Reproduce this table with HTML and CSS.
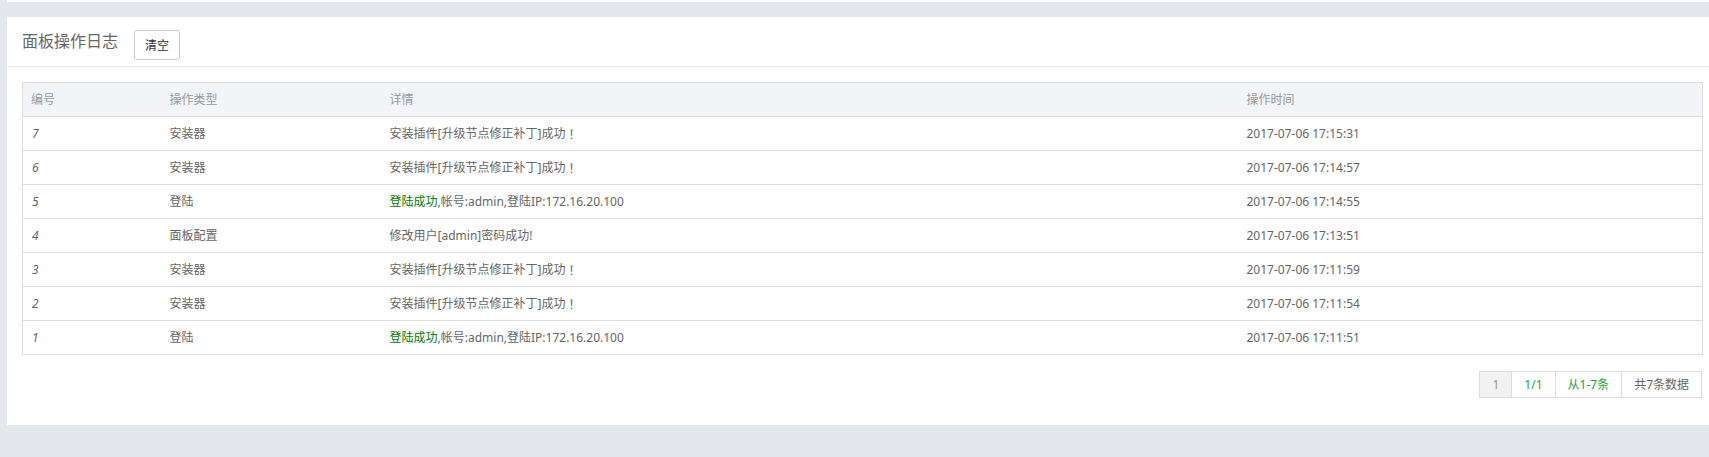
FILE: index.html
```html
<!DOCTYPE html>
<html lang="zh-CN">
<head>
<meta charset="utf-8">
<title>面板操作日志</title>
<link rel="stylesheet" href="styles.css">
</head>
<body>
<div class="page">
  <div class="prev-panel"></div>
  <div class="panel">
    <div class="panel-head">
      <span class="panel-title">面板操作日志</span>
      <button class="btn" type="button">清空</button>
    </div>
    <div class="panel-body">
      <table class="log-table">
        <colgroup>
          <col class="c1"><col class="c2"><col class="c3"><col class="c4">
        </colgroup>
        <thead>
          <tr><th>编号</th><th>操作类型</th><th>详情</th><th>操作时间</th></tr>
        </thead>
        <tbody>
          <tr><td class="num">7</td><td>安装器</td><td>安装插件[升级节点修正补丁]成功<span class="fw">！</span></td><td>2017-07-06 17:15:31</td></tr>
          <tr><td class="num">6</td><td>安装器</td><td>安装插件[升级节点修正补丁]成功<span class="fw">！</span></td><td>2017-07-06 17:14:57</td></tr>
          <tr><td class="num">5</td><td>登陆</td><td><span class="ok">登陆成功</span>,帐号:admin,登陆IP:172.16.20.100</td><td>2017-07-06 17:14:55</td></tr>
          <tr><td class="num">4</td><td>面板配置</td><td>修改用户[admin]密码成功!</td><td>2017-07-06 17:13:51</td></tr>
          <tr><td class="num">3</td><td>安装器</td><td>安装插件[升级节点修正补丁]成功<span class="fw">！</span></td><td>2017-07-06 17:11:59</td></tr>
          <tr><td class="num">2</td><td>安装器</td><td>安装插件[升级节点修正补丁]成功<span class="fw">！</span></td><td>2017-07-06 17:11:54</td></tr>
          <tr><td class="num">1</td><td>登陆</td><td><span class="ok">登陆成功</span>,帐号:admin,登陆IP:172.16.20.100</td><td>2017-07-06 17:11:51</td></tr>
        </tbody>
      </table>
      <div class="pager-row">
        <div class="pager">
          <span class="pg pg-cur">1</span>
          <span class="pg pg-green">1/1</span>
          <span class="pg pg-green">从1-7条</span>
          <span class="pg">共7条数据</span>
        </div>
      </div>
    </div>
  </div>
</div>
</body>
</html>
```

FILE: styles.css
```css
html, body {
  margin: 0;
  padding: 0;
  background: #e4e8ec;
}
body {
  font-family: "Noto Sans", "Noto Sans CJK SC", sans-serif;
  font-size: 12px;
  color: #666;
  overflow: hidden;
}
.page {
  padding-left: 7px;
  height: 457px;
}
.prev-panel {
  height: 2px;
  background: #fff;
  margin-bottom: 15px;
}
.panel {
  background: #fff;
  height: 408px;
}
.panel-head {
  height: 49px;
  border-bottom: 1px solid #e6e6e6;
  display: flex;
  align-items: center;
  padding-left: 15px;
}
.panel-title {
  font-size: 16px;
  color: #666;
  line-height: 20px;
  margin-top: -1px;
}
.btn {
  margin-left: 16px;
  margin-top: 7px;
  width: 46px;
  height: 30px;
  border: 1px solid #ccc;
  border-radius: 3px;
  background: #fff;
  color: #333;
  font-family: "Noto Sans", "Noto Sans CJK SC", sans-serif;
  font-size: 12px;
  padding: 0;
}
.panel-body {
  padding: 15px 7px 0 15px;
}
.log-table {
  width: 1680px;
  border-collapse: collapse;
  table-layout: fixed;
  border: 1px solid #ddd;
}
.c1 { width: 139px; }
.c2 { width: 220px; }
.c3 { width: 857px; }
.c4 { width: 464px; }
.log-table th,
.log-table td {
  text-align: left;
  padding: 8px 8px;
  height: 17px;
  line-height: 17px;
  border-top: 1px solid #ddd;
  font-weight: normal;
  white-space: nowrap;
}
.log-table th {
  background: #f2f4f7;
  color: #999;
}
.log-table td {
  color: #666;
}
.log-table td.num {
  font-style: italic;
  padding-left: 9px;
}
.fw {
  font-family: "Noto Sans CJK JP", sans-serif;
  display: inline-block;
  line-height: 17px;
  height: 17px;
  vertical-align: top;
}
.ok {
  color: #008000;
}
.pager-row {
  display: flex;
  justify-content: flex-end;
  margin-top: 16px;
}
.pager {
  display: flex;
  border: 1px solid #ddd;
  height: 25px;
}
.pg {
  display: flex;
  align-items: center;
  justify-content: center;
  padding: 0 12px;
  border-left: 1px solid #ddd;
  color: #666;
  line-height: 25px;
}
.pg:first-child {
  border-left: none;
}
.pg-cur {
  background: #f2f2f2;
  color: #999;
  width: 7px;
}
.pg-green {
  color: #20a53a;
}
```
